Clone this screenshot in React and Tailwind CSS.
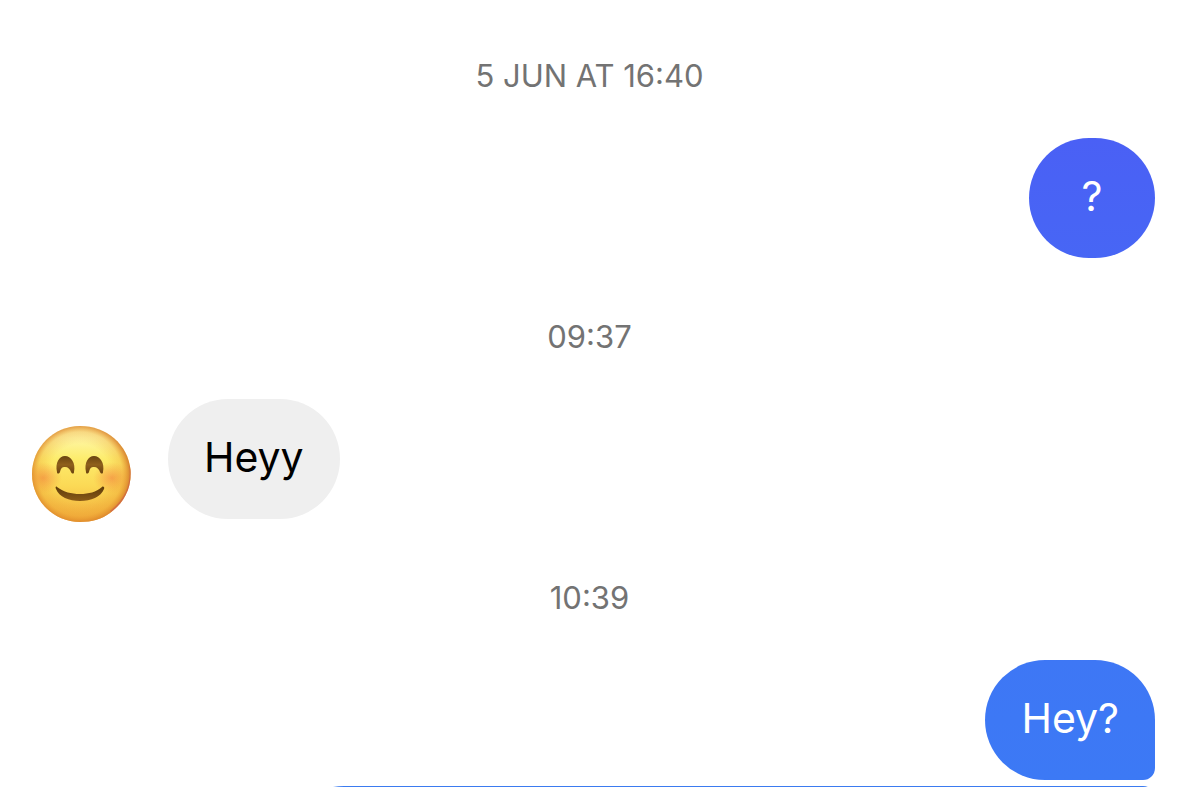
const THREAD = [
  {
    time: "5 JUN AT 16:40",
    messages: [{ id: 1, text: "?", mine: true, look: "rounded-[60px] bg-linear-to-b from-[#4a60f5] to-[#4766f5]" }],
  },
  {
    time: "09:37",
    messages: [{ id: 2, text: "Heyy", mine: false, look: "rounded-[60px] bg-[#efefef]" }],
  },
  {
    time: "10:39",
    messages: [
      { id: 3, text: "Hey?", mine: true, look: "rounded-[60px] rounded-br-xl bg-linear-to-b from-[#3e77f5] to-[#3c79f5]" },
      { id: 4, text: "", mine: true, look: "w-[77%] rounded-[60px] rounded-tr-xl bg-[#3b7bf0]" },
    ],
  },
];

function Avatar() {
  return (
    <svg viewBox="0 0 104 100" className="-mb-[5px] h-[100px] w-[104px] shrink-0" role="img" aria-label="Smiling face">
      <defs>
        <linearGradient id="face" x1="0" y1="0" x2="0" y2="1">
          <stop offset="0" stopColor="#fcf0a8" />
          <stop offset="0.14" stopColor="#fef6a4" />
          <stop offset="0.35" stopColor="#fdec6c" />
          <stop offset="0.62" stopColor="#fbd955" />
          <stop offset="1" stopColor="#f0a738" />
        </linearGradient>
        <radialGradient id="rim" gradientUnits="userSpaceOnUse" cx="50" cy="50" r="50">
          <stop offset="0.6" stopColor="#eb9c30" stopOpacity="0" />
          <stop offset="0.84" stopColor="#eb9c30" stopOpacity="0.3" />
          <stop offset="0.93" stopColor="#e08a2a" stopOpacity="0.65" />
          <stop offset="1" stopColor="#d47a2c" stopOpacity="0.9" />
        </radialGradient>
        <radialGradient id="cheek">
          <stop offset="0" stopColor="#f38340" stopOpacity="0.65" />
          <stop offset="0.5" stopColor="#f48c3f" stopOpacity="0.35" />
          <stop offset="1" stopColor="#f59a3b" stopOpacity="0" />
        </radialGradient>
        <linearGradient id="eye" x1="0" y1="0" x2="0" y2="1">
          <stop offset="0" stopColor="#6a4410" />
          <stop offset="0.5" stopColor="#8f601c" />
          <stop offset="1" stopColor="#6a4210" />
        </linearGradient>
        <linearGradient id="mouth" x1="0" y1="0" x2="0" y2="1">
          <stop offset="0" stopColor="#5e3b0a" />
          <stop offset="1" stopColor="#8a5a18" />
        </linearGradient>
        <clipPath id="head">
          <path d="M50 2C76 2 98 20 100.500 46C102 66 92 80 80 89C72 95 62 98 50 98C23.500 98 2 76.500 2 50S23.500 2 50 2Z" />
        </clipPath>
      </defs>
      <g clipPath="url(#head)">
        <rect width="104" height="100" fill="url(#face)" />
        <ellipse cx="13" cy="54" rx="19" ry="16" fill="url(#cheek)" />
        <ellipse cx="82" cy="54" rx="19" ry="16" fill="url(#cheek)" />
        <rect width="104" height="100" fill="url(#rim)" />
        <path d="M101 42c2 20-5 34-20 46" fill="none" stroke="#c4405c" strokeWidth="3" strokeOpacity="0.4" />
      </g>
      <path d="M27 48c-2-9 2-16 8-16s11 7 9 16c0 2-2 2-3 0-1-3-3-5-6-5s-4 1-5 5c-1 2-3 2-3 0Z" fill="url(#eye)" />
      <path d="M56 48c-2-9 2-16 8-16s11 7 9 16c0 2-2 2-3 0-1-3-3-5-6-5s-4 1-5 5c-1 2-3 2-3 0Z" fill="url(#eye)" />
      <path d="M27 63c7 5 14 7 23 7s16-2 22-7c1-1 3 0 2 2-3 8-13 12-24 12s-21-4-24-12c-1-2 0-3 1-2Z" fill="url(#mouth)" />
    </svg>
  );
}

function Bubble({ text, mine, look }) {
  return (
    <div
      className={`min-h-[120px] min-w-[126px] px-9 pt-[34px] pb-[38px] text-center text-[41px] leading-[48px] ${
        mine ? "text-white" : "text-black"
      } ${look}`}
    >
      {text}
    </div>
  );
}

function Message({ message }) {
  if (message.mine) {
    return (
      <li className="flex justify-end">
        <Bubble {...message} />
      </li>
    );
  }

  return (
    <li className="flex items-end gap-[34px] pl-[6px]">
      <Avatar />
      <Bubble {...message} />
    </li>
  );
}

export default function App() {
  return (
    <main className="flex h-screen flex-col gap-[59px] overflow-hidden bg-white px-6 pt-14 font-['Inter',sans-serif]">
      {THREAD.map((group) => (
        <section key={group.time} className="shrink-0">
          <div className="text-center text-[31px] leading-10 text-[#737373]">
            <time>{group.time}</time>
          </div>
          <ul className="mt-[42px] flex flex-col gap-[6px]">
            {group.messages.map((message) => (
              <Message key={message.id} message={message} />
            ))}
          </ul>
        </section>
      ))}
    </main>
  );
}
